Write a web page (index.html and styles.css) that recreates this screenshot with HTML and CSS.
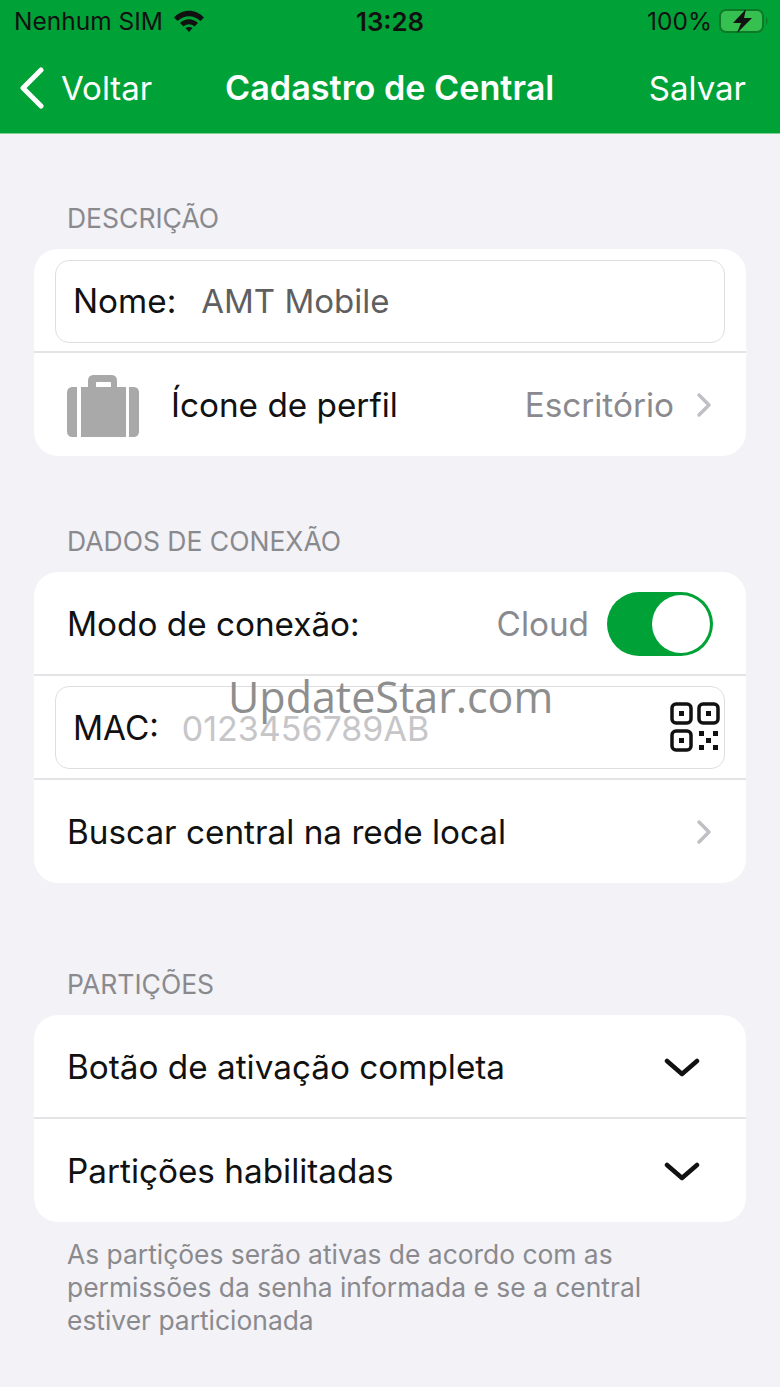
FILE: index.html
```html
<!DOCTYPE html>
<html lang="pt-BR">
<head>
  <meta charset="UTF-8" />
  <meta name="viewport" content="width=device-width, initial-scale=1.0"/>
  <title>Cadastro de Central</title>
  <link rel="stylesheet" href="styles.css">
</head>
<body>

  <header class="topbar">
    <div class="status">
      <div class="status-left">
        <span>Nenhum SIM</span>
        <svg class="wifi" viewBox="0 0 30 23" width="30" height="23">
          <path d="M0 7.500 C8 -1.500 22 -1.500 30 7.500 L26.500 11 C19.500 4.500 10.500 4.500 3.500 11Z" fill="#111"/>
          <path d="M6 13 C11.500 8 18.500 8 24 13 L20.500 16.500 C17 13.500 13 13.500 9.500 16.500Z" fill="#111"/>
          <path d="M11.500 18 C13.500 16.500 16.500 16.500 18.500 18 L15 22Z" fill="#111"/>
        </svg>
      </div>
      <span class="status-time">13:28</span>
      <div class="status-right">
        <span>100%</span>
        <svg class="battery" viewBox="0 0 50 26" width="50" height="26">
          <rect x="1" y="2" width="43" height="22" rx="6" fill="#35c04f" stroke="#0d7a27" stroke-width="2"/>
          <path d="M47 9 C49 10 49 16 47 17Z" fill="#0d7a27"/>
          <path d="M27 1 L14 15 H22 L18 25 L33 10 H25Z" fill="#111"/>
        </svg>
      </div>
    </div>
    <nav class="navbar">
      <div class="nav-back">
        <svg viewBox="0 0 26 42" width="26" height="42">
          <path d="M23 3 L5 21 L23 39" fill="none" stroke="#fff" stroke-width="5" stroke-linecap="round" stroke-linejoin="round"/>
        </svg>
        <span>Voltar</span>
      </div>
      <h1>Cadastro de Central</h1>
      <span class="nav-save">Salvar</span>
    </nav>
  </header>

  <main class="content">
    <h2 class="section-title">DESCRIÇÃO</h2>
    <section class="card">
      <div class="row row-field">
        <div class="field">
          <span class="label">Nome:</span>
          <span class="value">AMT Mobile</span>
        </div>
      </div>
      <div class="row row-icon">
        <svg class="case" viewBox="0 0 73 63" width="73" height="63">
          <path fill-rule="evenodd" d="M21 12 V6 C21 2 23 0 27 0 H44 C48 0 50 2 50 6 V12 H44 V8 C44 7.500 43.500 7 43 7 H30 C29.500 7 29 7.500 29 8 V12Z" fill="#a9a9a9"/>
          <path d="M10 12 V62 H6 C2 62 0 60 0 56 V18 C0 14 2 12 6 12Z" fill="#a9a9a9"/>
          <rect x="14" y="12" width="45" height="50" fill="#a9a9a9"/>
          <path d="M62 12 H66 C70 12 72 14 72 18 V56 C72 60 70 62 66 62 H62Z" fill="#a9a9a9"/>
        </svg>
        <span class="label">Ícone de perfil</span>
        <span class="detail">Escritório</span>
        <svg class="chevron" viewBox="0 0 16 26" width="16" height="26">
          <path d="M3 3 L13 13 L3 23" fill="none" stroke="#c0c0c4" stroke-width="3.500" stroke-linecap="round" stroke-linejoin="round"/>
        </svg>
      </div>
    </section>

    <h2 class="section-title title-connection">DADOS DE CONEXÃO</h2>
    <section class="card">
      <div class="row">
        <span class="label">Modo de conexão:</span>
        <span class="detail">Cloud</span>
        <div class="switch"><div class="knob"></div></div>
      </div>
      <div class="row row-field">
        <div class="field field-mac">
          <span class="label">MAC:</span>
          <span class="value placeholder">0123456789AB</span>
          <svg class="qr" viewBox="0 0 50 50" width="50" height="50">
            <g fill="none" stroke="#111" stroke-width="3.500">
              <rect x="2" y="2" width="19" height="19" rx="4"/>
              <rect x="29" y="2" width="19" height="19" rx="4"/>
              <rect x="2" y="29" width="19" height="19" rx="4"/>
            </g>
            <g fill="#111">
              <rect x="9" y="9" width="5" height="5"/>
              <rect x="36" y="9" width="5" height="5"/>
              <rect x="9" y="36" width="5" height="5"/>
              <rect x="29" y="29" width="5" height="5"/>
              <rect x="43" y="29" width="5" height="5"/>
              <rect x="36" y="36" width="5" height="5"/>
              <rect x="29" y="43" width="5" height="5"/>
              <rect x="43" y="43" width="5" height="5"/>
            </g>
          </svg>
        </div>
      </div>
      <div class="row">
        <span class="label">Buscar central na rede local</span>
        <svg class="chevron chevron-end" viewBox="0 0 16 26" width="16" height="26">
          <path d="M3 3 L13 13 L3 23" fill="none" stroke="#c0c0c4" stroke-width="3.500" stroke-linecap="round" stroke-linejoin="round"/>
        </svg>
      </div>
    </section>

    <h2 class="section-title title-partitions">PARTIÇÕES</h2>
    <section class="card">
      <div class="row">
        <span class="label">Botão de ativação completa</span>
        <svg class="caret" viewBox="0 0 36 20" width="36" height="20">
          <path d="M3 3 L18 16 L33 3" fill="none" stroke="#111" stroke-width="4.500" stroke-linecap="round" stroke-linejoin="round"/>
        </svg>
      </div>
      <div class="row">
        <span class="label">Partições habilitadas</span>
        <svg class="caret" viewBox="0 0 36 20" width="36" height="20">
          <path d="M3 3 L18 16 L33 3" fill="none" stroke="#111" stroke-width="4.500" stroke-linecap="round" stroke-linejoin="round"/>
        </svg>
      </div>
    </section>
    <p class="note">As partições serão ativas de acordo com as permissões da senha informada e se a central estiver particionada</p>
  </main>

  <div class="watermark">UpdateStar.com</div>

</body>
</html>
```

FILE: styles.css
```css
* {
  box-sizing: border-box;
}

html, body {
  margin: 0;
  padding: 0;
}

body {
  position: relative;
  height: 1387px;
  overflow: hidden;
  background: #f2f2f7;
  font-family: "Inter", "Liberation Sans", sans-serif;
  color: #111;
}

.topbar {
  height: 134px;
  background: #00a237;
  border-bottom: 1px solid #7fcf95;
}

.status {
  height: 42px;
  padding: 0 11px 0 14px;
  display: flex;
  align-items: center;
  justify-content: space-between;
  position: relative;
  font-size: 24.5px;
  color: #111;
}

.status-left,
.status-right {
  display: flex;
  align-items: center;
  gap: 11px;
}

.status-right {
  gap: 7px;
}

.status-time {
  position: absolute;
  left: 356px;
  font-size: 25.800px;
  font-weight: 600;
}

.navbar {
  height: 91px;
  padding: 0 34px 0 18px;
  display: flex;
  align-items: center;
  justify-content: space-between;
  position: relative;
  color: #fff;
  font-size: 33px;
}

.nav-back {
  display: flex;
  align-items: center;
  gap: 17px;
}

.navbar h1 {
  position: absolute;
  left: 225px;
  margin: 0;
  font-size: 34.200px;
  font-weight: 600;
}

.content {
  padding: 0 34px;
}

.section-title {
  height: 32px;
  padding: 0 33px;
  margin: 68px 0 0;
  font-size: 26.5px;
  line-height: 32px;
  font-weight: 400;
  color: #8a8a8e;
}

.title-connection {
  margin-top: 69px;
}

.title-partitions {
  margin-top: 85px;
}

.section-title + .card {
  margin-top: 15px;
}

.card {
  background: #fff;
  border-radius: 24px;
  overflow: hidden;
}

.row {
  height: 104px;
  padding: 0 34px 0 33px;
  display: flex;
  align-items: center;
  border-top: 2px solid #e4e4e6;
  font-size: 33.3px;
}

.row:first-child {
  height: 102px;
  padding-top: 2px;
  border-top: none;
}

.row:last-child {
  height: 105px;
}

.row-field {
  padding-left: 21px;
  padding-right: 21px;
}

.field {
  flex: 1;
  height: 83px;
  padding: 0 17px;
  display: flex;
  align-items: center;
  position: relative;
  border: 1.5px solid #dedee0;
  border-radius: 14px;
}

.field-mac {
  padding-top: 2px;
}

.label {
  color: #111;
}

.value {
  margin-left: 25px;
  font-size: 33px;
  color: #5f5f62;
}

.placeholder {
  margin-left: 23px;
  font-size: 34px;
  color: #c6c6c9;
}

.detail {
  margin-left: auto;
  color: #8a8a8e;
}

.case {
  margin-top: 4px;
}

.row-icon .label {
  margin-left: 31px;
}

.chevron {
  margin-left: 22px;
}

.chevron-end {
  margin-left: auto;
}

.switch {
  width: 106px;
  height: 64px;
  margin-left: 18px;
  margin-right: -1px;
  padding: 3px;
  display: flex;
  justify-content: flex-end;
  background: #00a237;
  border-radius: 32px;
}

.knob {
  width: 58px;
  height: 58px;
  border-radius: 50%;
  background: #fff;
}

.qr {
  position: absolute;
  right: 4px;
  top: 15px;
}

.caret {
  margin-left: auto;
  margin-right: 12px;
  margin-top: 2px;
}

.note {
  max-width: 600px;
  margin: 16px 33px 0;
  font-size: 26.4px;
  line-height: 33px;
  color: #8a8a8e;
}

.watermark {
  position: absolute;
  left: 228px;
  top: 669px;
  font-family: "Open Sans", sans-serif;
  font-size: 43px;
  line-height: 56px;
  color: #8e8e8e;
}
```
